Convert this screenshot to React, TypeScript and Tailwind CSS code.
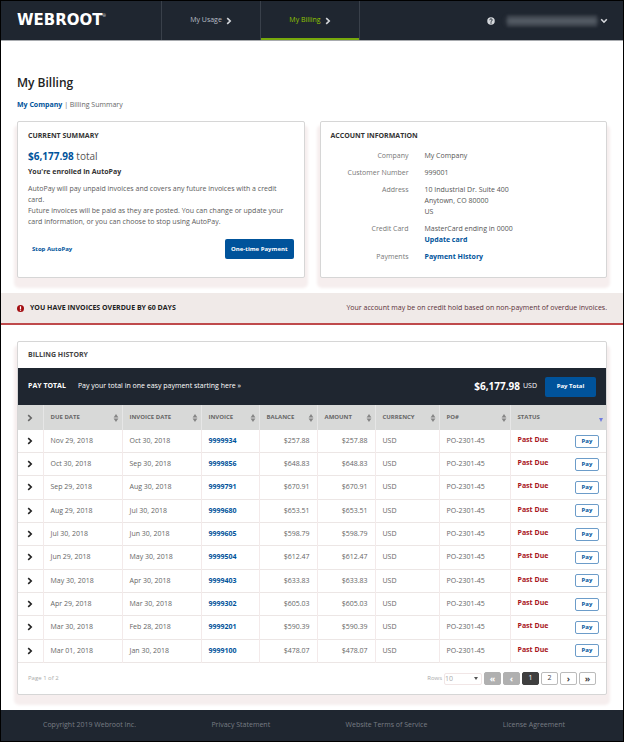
import type { ReactNode } from "react";
import clsx from "clsx";

type Invoice = {
  due: string;
  issued: string;
  number: string;
  amount: string;
};

const invoices: Invoice[] = [
  { due: "Nov 29, 2018", issued: "Oct 30, 2018", number: "9999934", amount: "$257.88" },
  { due: "Oct 30, 2018", issued: "Sep 30, 2018", number: "9999856", amount: "$648.83" },
  { due: "Sep 29, 2018", issued: "Aug 30, 2018", number: "9999791", amount: "$670.91" },
  { due: "Aug 29, 2018", issued: "Jul 30, 2018", number: "9999680", amount: "$653.51" },
  { due: "Jul 30, 2018", issued: "Jun 30, 2018", number: "9999605", amount: "$598.79" },
  { due: "Jun 29, 2018", issued: "May 30, 2018", number: "9999504", amount: "$612.47" },
  { due: "May 30, 2018", issued: "Apr 30, 2018", number: "9999403", amount: "$633.83" },
  { due: "Apr 29, 2018", issued: "Mar 30, 2018", number: "9999302", amount: "$605.03" },
  { due: "Mar 30, 2018", issued: "Feb 28, 2018", number: "9999201", amount: "$590.39" },
  { due: "Mar 01, 2018", issued: "Jan 30, 2018", number: "9999100", amount: "$478.07" },
];

const columns = [
  { label: "DUE DATE", width: "w-[79px]" },
  { label: "INVOICE DATE", width: "w-[79px]" },
  { label: "INVOICE", width: "w-[58px]" },
  { label: "BALANCE", width: "w-[58px]" },
  { label: "AMOUNT", width: "w-[58px]" },
  { label: "CURRENCY", width: "w-[64px]" },
  { label: "PO#", width: "w-[71px]" },
];

function Chevron({ className }: { className?: string }) {
  return (
    <svg viewBox="0 0 6 8" className={clsx("h-2 w-1.5", className)} fill="none" stroke="currentColor" strokeWidth="1.6">
      <path d="M1.2 1.2 4.2 4 1.2 6.8" />
    </svg>
  );
}

function SortArrows() {
  return (
    <svg viewBox="0 0 6 8" className="h-2 w-1.5 text-[#858585]" fill="currentColor">
      <path d="M3 0 5.4 3.5H.6zM3 8 .6 4.5h4.8z" />
    </svg>
  );
}

function Card({ children, className }: { children: ReactNode; className?: string }) {
  return (
    <section
      className={clsx(
        "rounded-xs border border-[#d6d6d6] bg-white shadow-[0_7px_3px_3px_#f6eeee]",
        className,
      )}
    >
      {children}
    </section>
  );
}

/* Top bar with logo, tabs and the signed-in user */
function Header() {
  return (
    <header className="flex h-10 border-b border-[#a8abaf] bg-[#1f2630] text-[7px] text-[#b9bec6]">
      <a href="#" className="flex w-40 items-start pt-[7px] pl-4 text-white">
        <span className="font-['DejaVu_Sans',sans-serif] text-[15px] leading-6 font-bold">WEBROOT</span>
        <span className="pt-1 text-[4px] leading-2">®</span>
      </a>
      <nav className="flex">
        <a href="#" className="flex w-[99px] items-center justify-center gap-1 border-l border-[#39404a]">
          My Usage <Chevron className="text-[#d5d8dc]" />
        </a>
        <a
          href="#"
          className="flex w-[100px] items-center justify-center gap-1 border-x border-[#39404a] text-[#8fc400] shadow-[inset_0_-2px_0_#77a80c]"
        >
          My Billing <Chevron className="text-[#d5d8dc]" />
        </a>
      </nav>
      <div className="ml-auto flex items-center pr-4">
        <button aria-label="Help" className="mr-3">
          <svg viewBox="0 0 16 16" className="size-2">
            <circle cx="8" cy="8" r="7.5" fill="#d5d8dc" />
            <path d="M5.5 6.3c0-3.4 5-3.2 5-.3C10.5 7.9 8 7.8 8 9.6" fill="none" stroke="#1f2630" strokeWidth="2" />
            <circle cx="8" cy="12" r="1.3" fill="#1f2630" />
          </svg>
        </button>
        <button aria-label="Account menu" className="flex items-center gap-1">
          <span className="flex h-3 w-[90px] items-center bg-[#303740] blur-[1px]">
            <span className="h-1.5 w-full bg-[#5b626b] blur-[2px]"></span>
          </span>
          <Chevron className="rotate-90 text-[#d5d8dc]" />
        </button>
      </div>
    </header>
  );
}

function CurrentSummary() {
  return (
    <Card className="flex-1 px-2.5 pt-2 pb-4">
      <h2 className="text-[7px] leading-3 font-bold text-[#333]">CURRENT SUMMARY</h2>
      <p className="mt-1.5 text-[10px] leading-4 text-[#555]">
        <b className="text-[#00539b]">$6,177.98</b> total
      </p>
      <p className="mt-0.5 text-[7px] leading-3 font-bold text-[#333]">You're enrolled in AutoPay</p>
      <p className="mt-[5px] text-[7px] leading-[11px] text-[#5b5b5b]">
        AutoPay will pay unpaid invoices and covers any future invoices with a credit card.
        <br />
        Future invoices will be paid as they are posted. You can change or update your card information, or you can
        choose to stop using AutoPay.
      </p>
      <div className="mt-3 flex items-center justify-between">
        <button className="ml-1 text-[6px] font-bold text-[#00539b]">Stop AutoPay</button>
        <button className="h-5 rounded-xs bg-[#00539b] px-1.5 text-[6px] font-bold text-white">One-time Payment</button>
      </div>
    </Card>
  );
}

function InfoRow({ label, children }: { label: string; children: ReactNode }) {
  return (
    <div className="flex gap-4">
      <dt className="w-[78px] text-right text-[#777]">{label}</dt>
      <dd>{children}</dd>
    </div>
  );
}

function AccountInformation() {
  return (
    <Card className="flex-1 px-2.5 pt-2 pb-[15px]">
      <h2 className="text-[7px] leading-3 font-bold text-[#333]">ACCOUNT INFORMATION</h2>
      <dl className="mt-2 flex flex-col gap-1.5 text-[7px] leading-[11px] text-[#555]">
        <InfoRow label="Company">My Company</InfoRow>
        <InfoRow label="Customer Number">999001</InfoRow>
        <InfoRow label="Address">
          10 Industrial Dr. Suite 400
          <br />
          Anytown, CO 80000
          <br />
          US
        </InfoRow>
        <InfoRow label="Credit Card">
          MasterCard ending in 0000
          <br />
          <a href="#" className="font-bold text-[#00539b]">Update card</a>
        </InfoRow>
        <InfoRow label="Payments">
          <a href="#" className="font-bold text-[#00539b]">Payment History</a>
        </InfoRow>
      </dl>
    </Card>
  );
}

function OverdueAlert() {
  return (
    <div className="mt-[15px] flex h-8 items-center border-b-2 border-[#bf4a4c] bg-[#f0eae8] px-4 text-[7px]">
      <svg viewBox="0 0 8 8" className="mr-1.5 size-[7px]">
        <circle cx="4" cy="4" r="4" fill="#a30d11" />
        <path d="M3.3 1.5h1.4v3H3.3zM3.3 5.2h1.4v1.3H3.3z" fill="#fff" />
      </svg>
      <strong className="text-[#222]">YOU HAVE INVOICES OVERDUE BY 60 DAYS</strong>
      <span className="ml-auto text-[#5a3038]">
        Your account may be on credit hold based on non-payment of overdue invoices.
      </span>
    </div>
  );
}

function InvoiceTable() {
  return (
    <table className="h-[258px] w-full table-fixed border-collapse text-left text-[7px] text-[#666]">
      <thead>
        <tr className="h-[25px] bg-[#d8d9d8] text-[6px] text-[#666]">
          <th className="w-[25px] border-r border-[#e6e6e6]">
            <Chevron className="mx-auto" />
          </th>
          {columns.map((col) => (
            <th key={col.label} className={clsx("border-r border-[#e6e6e6] pr-[3px] pl-[7px]", col.width)}>
              <div className="flex items-center justify-between">
                {col.label}
                <SortArrows />
              </div>
            </th>
          ))}
          <th className="pr-[3px] pl-[7px]">
            <div className="flex items-center justify-between">
              STATUS
              <svg viewBox="0 0 4 4" className="mt-1 size-1">
                <path d="M0 0h4L2 4z" fill="#6f7be0" />
              </svg>
            </div>
          </th>
        </tr>
      </thead>
      <tbody>
        {invoices.map((inv) => (
          <tr key={inv.number} className="border-b border-[#ece6e5]">
            <td className="border-r border-[#f3eaea]">
              <button aria-label={`Expand ${inv.number}`} className="mx-auto block text-[#222]">
                <Chevron />
              </button>
            </td>
            <td className="border-r border-[#f3eaea] pl-[7px]">{inv.due}</td>
            <td className="border-r border-[#f3eaea] pl-[7px]">{inv.issued}</td>
            <td className="border-r border-[#f3eaea] pl-[7px]">
              <a href="#" className="font-bold text-[#00539b]">{inv.number}</a>
            </td>
            <td className="border-r border-[#f3eaea] pr-[7px] text-right">{inv.amount}</td>
            <td className="border-r border-[#f3eaea] pr-[7px] text-right">{inv.amount}</td>
            <td className="border-r border-[#f3eaea] pl-[7px]">USD</td>
            <td className="border-r border-[#f3eaea] pl-[7px]">PO-2301-45</td>
            <td className="pr-[7px] pl-[7px]">
              <div className="flex items-center justify-between">
                <span className="pb-0.5 font-bold text-[#a8141b]">Past Due</span>
                <button className="h-[13px] w-6 rounded-xs border border-[#6c9cc9] text-[6px] leading-[11px] font-bold text-[#00539b]">
                  Pay
                </button>
              </div>
            </td>
          </tr>
        ))}
      </tbody>
    </table>
  );
}

function PageButton({ label, children, className }: { label: string; children: ReactNode; className: string }) {
  return (
    <button
      aria-label={label}
      className={clsx("flex h-[13px] w-[17px] items-center justify-center rounded-xs border", className)}
    >
      {children}
    </button>
  );
}

function Pagination() {
  return (
    <div className="flex h-[31px] items-center px-2.5 text-[6px] text-[#aaa]">
      <span>Page 1 of 2</span>
      <div className="ml-auto flex items-center gap-0.5">
        <label htmlFor="rows">Rows</label>
        <div className="relative">
          <select id="rows" className="block h-3 w-[38px] appearance-none rounded-xs border border-[#f1e6e6] text-[7px] leading-[10px]">
            <option>10</option>
            <option>25</option>
          </select>
          <svg viewBox="0 0 4 3" className="pointer-events-none absolute top-1 right-1 h-[3px] w-1">
            <path d="M0 0h4L2 3z" fill="#555" />
          </svg>
        </div>
        <div className="flex gap-[2px] text-[7px] text-[#444]">
          <PageButton label="First page" className="border-[#b0b0b0] bg-[#b0b0b0] text-[9px] font-bold text-white">«</PageButton>
          <PageButton label="Previous page" className="border-[#b0b0b0] bg-[#b0b0b0] text-[9px] font-bold text-white">‹</PageButton>
          <PageButton label="Page 1" className="border-[#3f3f3f] bg-[#3f3f3f] text-white">1</PageButton>
          <PageButton label="Page 2" className="border-[#bbb]">2</PageButton>
          <PageButton label="Next page" className="border-[#bbb] text-[9px] font-bold">›</PageButton>
          <PageButton label="Last page" className="border-[#bbb] text-[9px] font-bold">»</PageButton>
        </div>
      </div>
    </div>
  );
}

function BillingHistory() {
  return (
    <Card className="mx-4 mt-4">
      <h2 className="flex h-[26px] items-center px-2.5 text-[7px] font-bold text-[#444]">BILLING HISTORY</h2>
      <div className="flex h-[37px] items-center bg-[#1f2630] px-2.5 text-[7px] text-white">
        <strong>PAY TOTAL</strong>
        <a href="#" className="ml-3">Pay your total in one easy payment starting here »</a>
        <span className="ml-auto flex items-center gap-[3px]">
          <b className="text-[10px]">$6,177.98</b> USD
        </span>
        <button className="ml-2 h-5 w-[51px] rounded-xs bg-[#00539b] text-[6px] font-bold">Pay Total</button>
      </div>
      <InvoiceTable />
      <Pagination />
    </Card>
  );
}

function Footer() {
  return (
    <footer className="mt-[15px] flex h-[31px] items-center justify-between bg-[#1f2630] pr-[58px] pl-[42px] text-[7px] text-[#787d84]">
      <span>Copyright 2019 Webroot Inc.</span>
      <a href="#">Privacy Statement</a>
      <a href="#">Website Terms of Service</a>
      <a href="#">License Agreement</a>
    </footer>
  );
}

export default function App() {
  return (
    <div className="border border-black bg-white font-['Open_Sans',sans-serif]">
      <Header />
      <main>
        <div className="px-4 pt-[34px]">
          <h1 className="text-[12px] leading-4 font-semibold text-[#222]">My Billing</h1>
          <p className="mt-2 text-[7px] leading-3 text-[#666]">
            <a href="#" className="font-bold text-[#00539b]">My Company</a> | Billing Summary
          </p>
        </div>
        <div className="mt-2.5 flex gap-[15px] px-4">
          <CurrentSummary />
          <AccountInformation />
        </div>
        <OverdueAlert />
        <BillingHistory />
      </main>
      <Footer />
    </div>
  );
}
